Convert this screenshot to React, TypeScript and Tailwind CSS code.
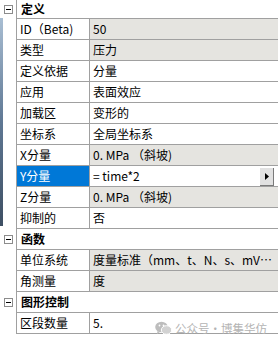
import React from "react";

type Row = {
  label: string;
  value: string;
  readOnly?: boolean;
  selected?: boolean;
};

type Section = { title: string; rows: Row[] };

const sections: Section[] = [
  {
    title: "定义",
    rows: [
      { label: "ID（Beta)", value: "50", readOnly: true },
      { label: "类型", value: "压力", readOnly: true },
      { label: "定义依据", value: "分量" },
      { label: "应用", value: "表面效应" },
      { label: "加载区", value: "变形的" },
      { label: "坐标系", value: "全局坐标系" },
      { label: "X分量", value: "0. MPa （斜坡)", readOnly: true },
      { label: "Y分量", value: "= time*2", selected: true },
      { label: "Z分量", value: "0. MPa （斜坡)", readOnly: true },
      { label: "抑制的", value: "否" },
    ],
  },
  {
    title: "函数",
    rows: [
      { label: "单位系统", value: "度量标准（mm、t、N、s、mV、mA）度", readOnly: true },
      { label: "角测量", value: "度", readOnly: true },
    ],
  },
  {
    title: "图形控制",
    rows: [{ label: "区段数量", value: "5." }],
  },
];

const MinusBox = () => (
  <div className="w-[9px] h-[9px] border border-[#8c8c8c] bg-white flex items-center justify-center">
    <div className="w-[5px] h-px bg-black" />
  </div>
);

const Header = ({ title, first }: { title: string; first?: boolean }) => (
  <div className={`flex ${first ? "h-[19px]" : "h-[21px]"}`}>
    <div className="w-[16px] flex items-center justify-center pl-[1px]">
      <MinusBox />
    </div>
    <div className="flex-1 border-l border-b border-[#a0a0a0] flex items-center pl-[4px] font-bold">
      {title}
    </div>
  </div>
);

const PropRow = ({ row }: { row: Row }) => (
  <div className="flex h-[21px]">
    <div className="w-[16px]" />
    <div className="flex-1 flex border-l border-b border-[#a0a0a0] min-w-0">
      <div
        className={`w-[73px] shrink-0 flex items-center pl-[3px] border-r border-[#a0a0a0] ${
          row.selected ? "bg-[#0078d7] text-white" : "bg-white"
        }`}
      >
        {row.label}
      </div>
      <div
        className={`flex-1 min-w-0 flex items-center pl-[3px] pr-[4px] ${
          row.readOnly ? "bg-[#e5e4e0]" : "bg-white"
        } ${row.selected ? "pr-0" : ""}`}
      >
        <span className="truncate flex-1 leading-[20px]">{row.value}</span>
        {row.selected && (
          <div className="w-[15px] h-[19px] shrink-0 bg-[#e1e1e1] border-l border-t border-white shadow-[inset_-1px_-1px_0_#7a7a7a] flex items-center justify-center">
            <svg width="4" height="7" viewBox="0 0 4 7">
              <path d="M0 0 L4 3.5 L0 7 Z" fill="#000" />
            </svg>
          </div>
        )}
      </div>
    </div>
  </div>
);

export default function App() {
  return (
    <div
      className="relative w-[278px] h-[341px] bg-white overflow-hidden text-[12px] leading-[20px] text-black"
      style={{ fontFamily: '"Noto Sans CJK SC", sans-serif' }}
    >
      {/* window edge behind the panel */}
      <div className="absolute left-0 top-[18px] w-[3px] h-[208px] bg-gradient-to-b from-[#a9bed3] via-[#5f7894] to-[#3e4f63]" />

      {sections.map((s, i) => (
        <div key={s.title}>
          <Header title={s.title} first={i === 0} />
          {s.rows.map((r) => (
            <PropRow key={r.label} row={r} />
          ))}
        </div>
      ))}

      {/* watermark */}
      <div className="absolute left-[155px] top-[318px] flex items-center gap-[3px] whitespace-nowrap text-[#b4b4b4] text-[11.5px]">
        <svg width="17" height="14" viewBox="0 0 17 14">
          <ellipse cx="6.5" cy="6" rx="6.3" ry="5.3" fill="#bdbdbd" />
          <path d="M2.5 10 L2 13 L5 11 Z" fill="#bdbdbd" />
          <ellipse cx="11.5" cy="9" rx="5.2" ry="4.3" fill="#d2d2d2" stroke="#fff" strokeWidth="1" />
          <circle cx="4.5" cy="4.5" r="0.9" fill="#fff" />
          <circle cx="8.5" cy="4.5" r="0.9" fill="#fff" />
        </svg>
        <span>公众号·博集华仿</span>
      </div>
    </div>
  );
}
